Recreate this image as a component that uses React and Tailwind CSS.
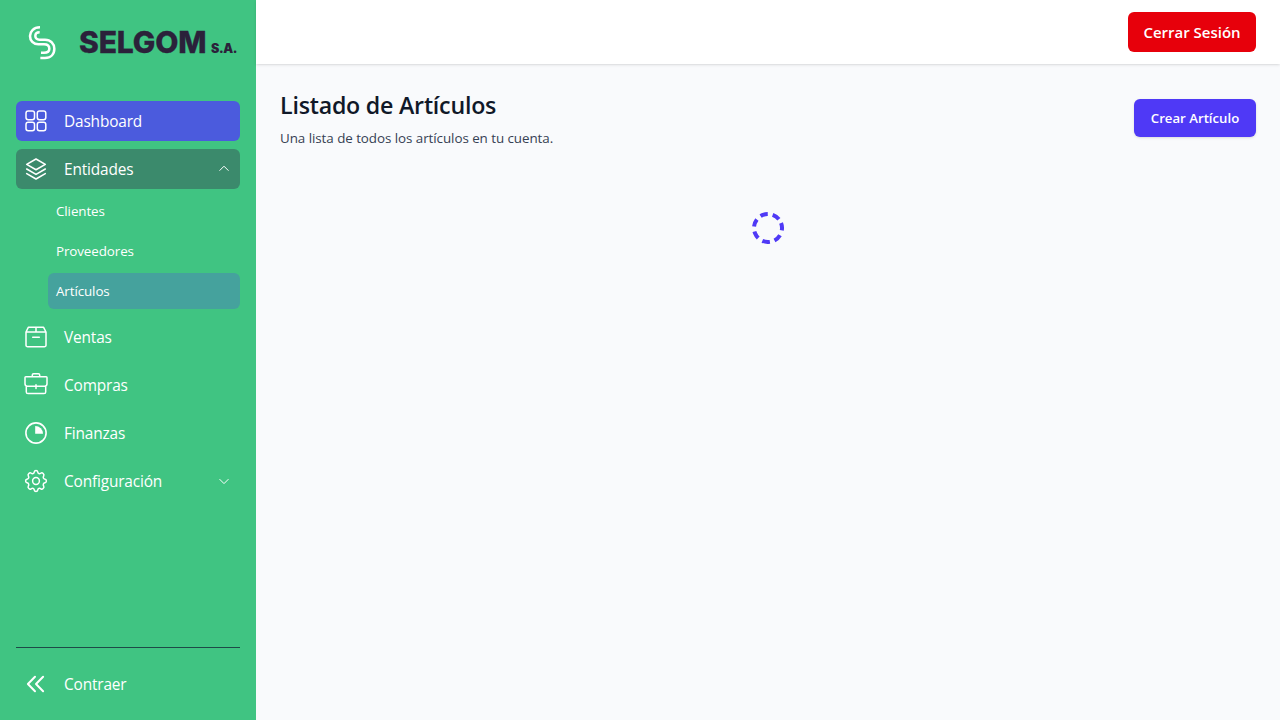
import React from 'react';

const Icon = ({ children, w = 1.6 }) => (
  <svg className="size-6 shrink-0" viewBox="0 0 24 24" fill="none" stroke="currentColor" strokeWidth={w} strokeLinecap="round" strokeLinejoin="round">
    {children}
  </svg>
);

const icons = {
  dashboard: (
    <Icon w={1.5}>
      <rect x="2" y="2" width="8.5" height="8.7" rx="2.2" />
      <rect x="13.3" y="2" width="8.5" height="8.7" rx="2.2" />
      <rect x="2" y="13.3" width="8.5" height="8.5" rx="2.2" />
      <rect x="13.3" y="13.3" width="8.5" height="8.5" rx="2.2" />
    </Icon>
  ),
  layers: (
    <Icon>
      <path d="M12 2 21.3 7.4 12 12.8 2.7 7.4Z" />
      <path d="M2.7 12 12 17.4 21.3 12M2.7 16.6 12 22 21.3 16.6" />
    </Icon>
  ),
  box: (
    <Icon w={1.5}>
      <path d="M2 7 4.3 2.3H19.6L22 7V20.2A1.6 1.6 0 0 1 20.4 21.8H3.6A1.6 1.6 0 0 1 2 20.2ZM2 7H22M12 2.3V7M8.7 12.2H15.3" />
    </Icon>
  ),
  briefcase: (
    <Icon w={1.5}>
      <path d="M1.8 3.7H22.2Q23 3.7 23 4.5V10.8Q23 13.2 20.6 13.2H3.4Q1 13.2 1 10.8V4.5Q1 3.7 1.8 3.7ZM8.3 3.7V2Q8.3 .8 9.5 .8H14.5Q15.7 .8 15.7 2V3.7M2.3 13.2V18.9Q2.3 20.6 4 20.6H20Q21.7 20.6 21.7 18.9V13.2M12 11.8V15.4" />
    </Icon>
  ),
  pie: (
    <Icon>
      <circle cx="12" cy="12" r="10.1" />
      <path d="M11.2 5A7.8 7.8 0 0 1 19 12.8H11.2Z" fill="currentColor" stroke="none" />
    </Icon>
  ),
  gear: (
    <Icon w={1.5}>
      <circle cx="12" cy="12" r="3.4" />
      <path d="M10.3 2.8C10.6 1.1 13.4 1.1 13.7 2.8 14 4.7 15.4 5.2 16.9 4.1 18.3 3 20.6 5.2 19.7 6.8 18.7 8.5 19.3 9.9 21.1 10.3 22.8 10.7 22.8 13.3 21.1 13.7 19.3 14.1 18.7 15.5 19.7 17.2 20.6 18.8 18.3 21 16.9 19.9 15.4 18.8 14 19.3 13.7 21.2 13.4 22.9 10.6 22.9 10.3 21.2 10 19.3 8.6 18.8 7.1 19.9 5.7 21 3.4 18.8 4.3 17.2 5.3 15.5 4.7 14.1 2.9 13.7 1.2 13.3 1.2 10.7 2.9 10.3 4.7 9.9 5.3 8.5 4.3 6.8 3.4 5.2 5.7 3 7.1 4.1 8.6 5.2 10 4.7 10.3 2.8Z" />
    </Icon>
  ),
  collapse: (
    <Icon w={2}>
      <path d="M11 4.7 3.9 12 11 19.3M19.1 4.7 12 12 19.1 19.3" />
    </Icon>
  ),
};

const Chevron = ({ up }) => (
  <svg className="size-4 shrink-0" viewBox="0 0 16 16" fill="none" stroke="currentColor" strokeWidth="1" strokeLinecap="round" strokeLinejoin="round">
    <path d={up ? 'M3.8 9.4 8 5.2 12.2 9.4' : 'M3.8 6.4 8 10.6 12.2 6.4'} />
  </svg>
);

const NavItem = ({ icon, label, className = '', chevron }) => (
  <a className={`flex h-10 items-center rounded-md px-2 ${className}`}>
    {icons[icon]}
    <span className="ml-4 flex-1 pt-0.5 text-[15.4px] leading-6 tracking-[-0.15px]">{label}</span>
    {chevron && <Chevron up={chevron === 'up'} />}
  </a>
);

const SubItem = ({ label, className = '' }) => (
  <a className={`flex h-9 items-center rounded-md px-2 pt-px text-[13.4px] tracking-[-0.1px] ${className}`}>{label}</a>
);

export default function App() {
  return (
    <div className="flex h-screen overflow-hidden bg-[#f9fafc] font-['Open_Sans','Noto_Sans',sans-serif]">
      <aside className="flex w-64 shrink-0 flex-col bg-[#40c482] px-4 text-white">
        <div className="flex h-[85px] shrink-0 items-center pl-3">
          <svg className="h-[34px] w-7 shrink-0" viewBox="84 78 84 102" fill="none" stroke="currentColor" strokeWidth="7.6">
            <path d="M120 82C100 82 90 95 90 108C90 122 100 133 115 133H132C142 133 148 138 148 146C148 153 142 158 132 158H123" />
            <path d="M119 97C110 97 106 102 106 108C106 114 111 119 118 119H135C152 119 163 131 163 146C163 163 152 174 135 174H121" />
          </svg>
          <div className="ml-[23px] flex items-baseline whitespace-nowrap font-['Inter',sans-serif] font-extrabold text-[#2b213a]">
            <span className="w-[128px] text-[30px] tracking-[-0.15px] [-webkit-text-stroke:0.3px_#2b213a]">SELGOM</span>
            <span className="ml-1 text-[12.5px] font-black tracking-[-0.4px]">S.A.</span>
          </div>
        </div>
        <nav className="mt-4 flex flex-1 flex-col gap-2">
          <NavItem icon="dashboard" label="Dashboard" className="bg-[#4b5bdd]" />
          <div>
            <NavItem icon="layers" label="Entidades" chevron="up" className="bg-[#3b8a6c]" />
            <div className="mt-1 ml-8 flex flex-col gap-1">
              <SubItem label="Clientes" />
              <SubItem label="Proveedores" />
              <SubItem label="Artículos" className="bg-[#45a29d]" />
            </div>
          </div>
          <NavItem icon="box" label="Ventas" />
          <NavItem icon="briefcase" label="Compras" />
          <NavItem icon="pie" label="Finanzas" />
          <NavItem icon="gear" label="Configuración" chevron="down" />
        </nav>
        <div className="border-t border-[#1e4a48] pt-4 pb-4">
          <NavItem icon="collapse" label="Contraer" />
        </div>
      </aside>
      <div className="flex flex-1 flex-col">
        <header className="flex h-16 shrink-0 items-center justify-end bg-white px-6 shadow-sm">
          <button className="h-10 w-32 rounded-md bg-[#e7000b] text-[15px] font-semibold text-white">Cerrar Sesión</button>
        </header>
        <main className="px-6 pt-6">
          <div className="flex items-center justify-between">
            <div>
              <h1 className="-mt-px text-[23.2px] leading-9 font-semibold tracking-[-0.22px] text-gray-900">Listado de Artículos</h1>
              <p className="mt-[5px] text-[13.4px] leading-5 tracking-[-0.06px] text-gray-700">Una lista de todos los artículos en tu cuenta.</p>
            </div>
            <button className="h-[38px] w-[122px] rounded-md bg-[#4f39f6] pt-px text-[13.2px] font-semibold text-white shadow-sm">Crear Artículo</button>
          </div>
          <div className="mt-16 flex justify-center">
            <svg className="size-8" viewBox="0 0 32 32" fill="none" stroke="#4f39f6" strokeWidth="4">
              <circle cx="16" cy="16" r="14" strokeDasharray="7.6 4.966" transform="rotate(-21 16 16)" />
            </svg>
          </div>
        </main>
      </div>
    </div>
  );
}
